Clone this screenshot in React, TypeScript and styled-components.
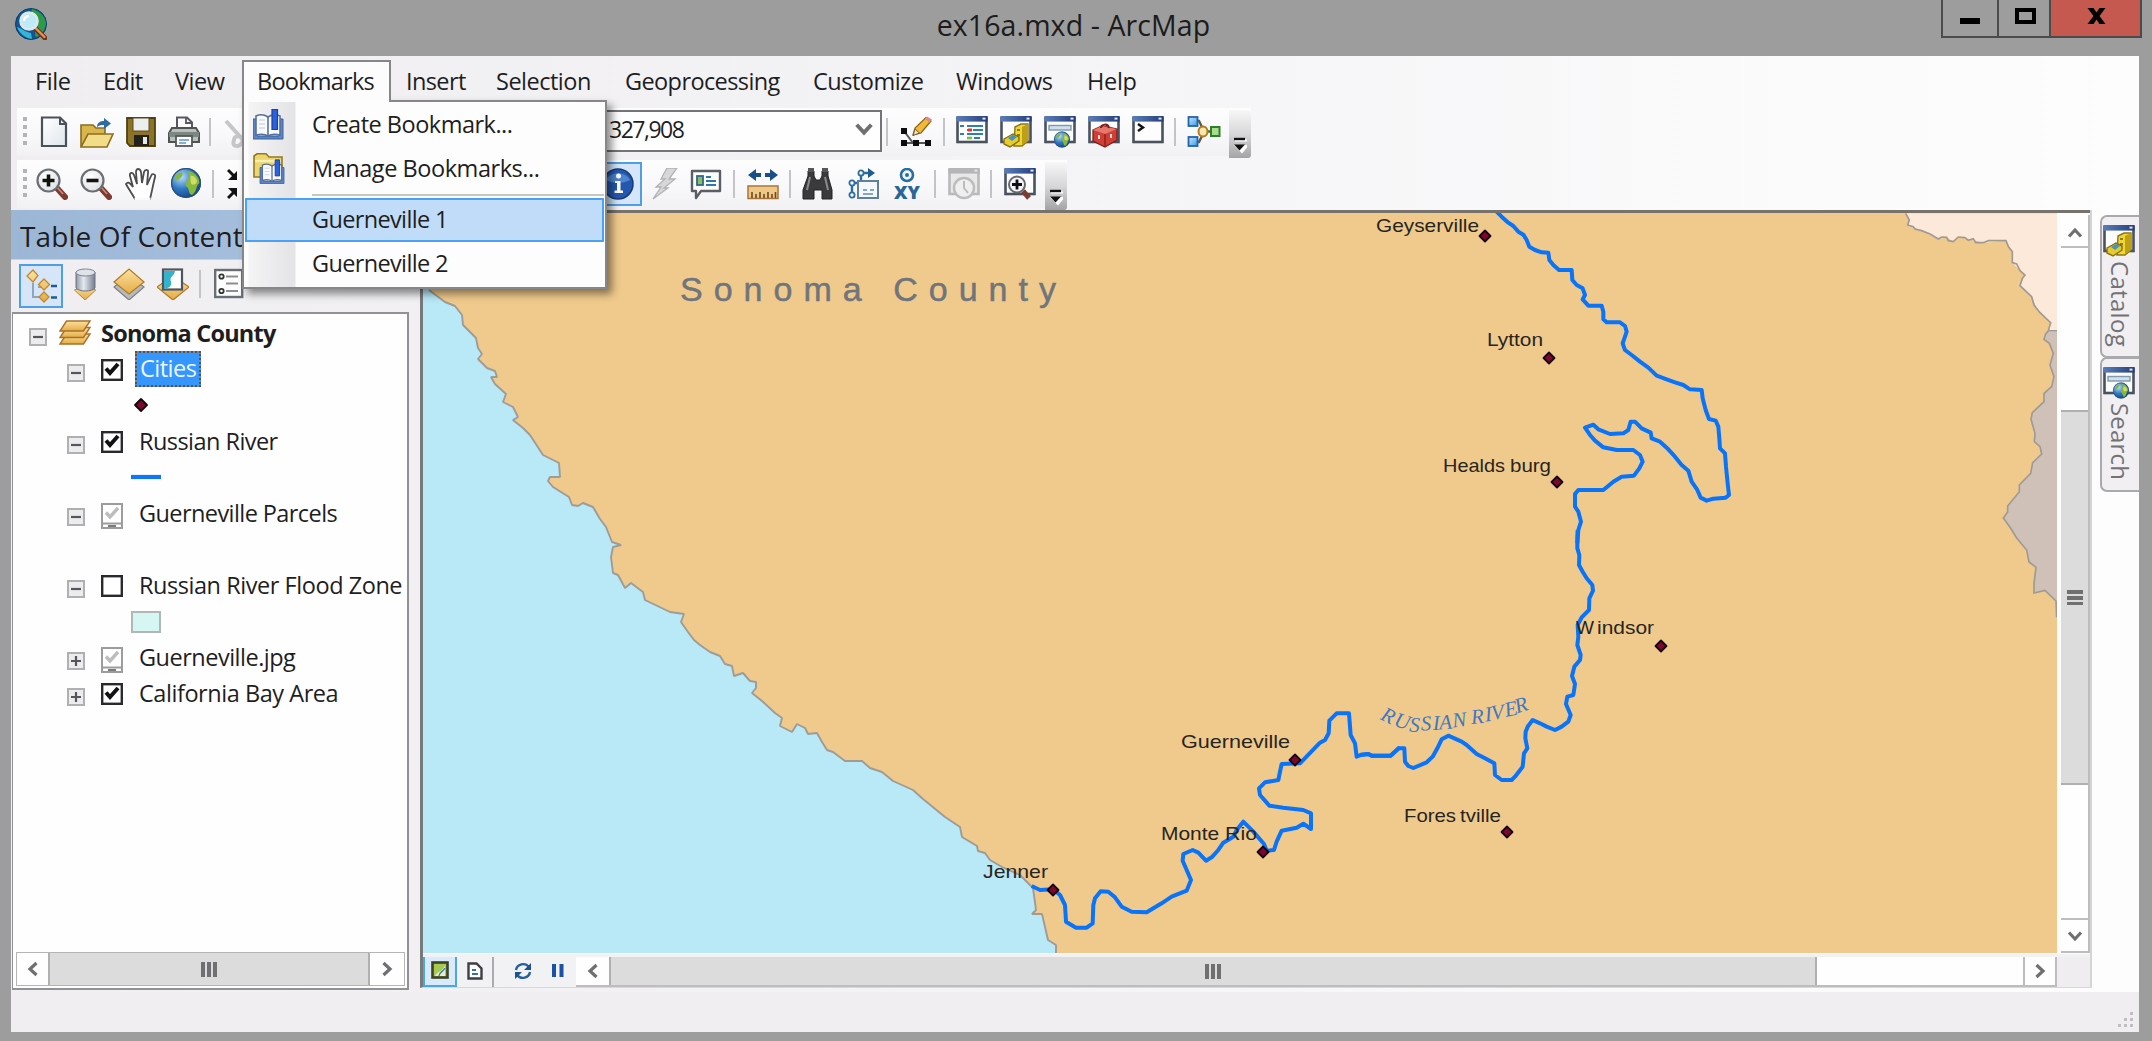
import React from 'react';
import styled, { createGlobalStyle, css } from 'styled-components';

const Global = createGlobalStyle`
  * { box-sizing: border-box; }
  body { margin: 0; background: #9d9d9d; overflow: hidden; }
`;

const ui = "'Open Sans', 'Noto Sans', sans-serif";

/* ---------- window frame ---------- */

const Frame = styled.div`
  width: 2152px;
  height: 1041px;
  background: #9d9d9d;
  font-family: ${ui};
  color: #1e1e22;
  display: flex;
  flex-direction: column;
  overflow: hidden;
`;

const TitleBar = styled.header`
  height: 56px;
  flex: none;
  display: grid;
  grid-template-columns: 241px 1fr 241px;
  padding: 0 10px 0 15px;
`;

const Logo = styled.div`
  padding-top: 8px;
  height: 40px;
`;

const Title = styled.div`
  text-align: center;
  font-size: 28.5px;
  line-height: 50px;
  letter-spacing: 0.1px;
  color: #1c1c1c;
  padding-right: 10px;
`;

const WindowButtons = styled.div`
  display: flex;
  justify-content: flex-end;
  height: 38px;
`;

const WindowButton = styled.div<{ $w: number; $close?: boolean }>`
  width: ${p => p.$w}px;
  height: 38px;
  border: 2px solid #4b4b4b;
  border-top: 0;
  margin-left: -2px;
  background: ${p => (p.$close ? '#c5594f' : '#9d9d9d')};
  display: flex;
  justify-content: center;
`;

const Client = styled.main`
  position: relative;
  width: 2128px;
  height: 976px;
  margin-left: 11px;
  background: linear-gradient(90deg, #f0eef1 0, #f3f2f5 900px, #fafafb 1700px, #fdfdfd 2128px);
  display: flex;
  flex-direction: column;
`;

/* ---------- menu bar ---------- */

const MenuBar = styled.nav`
  height: 51px;
  flex: none;
  display: flex;
  padding-left: 24px;
`;

const MenuText = styled.div<{ $w: number; $track?: number }>`
  width: ${p => p.$w}px;
  font-size: 23.5px;
  line-height: 50px;
  letter-spacing: ${p => p.$track ?? -0.5}px;
  white-space: nowrap;
`;

const OpenMenu = styled.section`
  position: absolute;
  left: 231px;
  top: 4px;
  width: 365px;
`;

const OpenMenuTab = styled.div`
  position: relative;
  z-index: 1;
  width: 149px;
  height: 42px;
  background: #fcfcfd;
  border: 2px solid #87878a;
  border-bottom: 0;
  padding-left: 13px;
  font-size: 23.5px;
  line-height: 39px;
  letter-spacing: -0.75px;
  white-space: nowrap;
`;

const MenuPanel = styled.div`
  margin-top: -2px;
  height: 189px;
  border: 2px solid #87878a;
  background: linear-gradient(90deg, #fdfdfd 4px, #f4f4f5 5px, #e4e4e7 51px, #fdfdfd 52px);
  box-shadow: 5px 5px 8px rgba(0, 0, 0, 0.45);
  padding: 1px 1px 0;
`;

const MenuRow = styled.div<{ $on?: boolean; $track: number }>`
  height: 44px;
  display: flex;
  align-items: center;
  padding-bottom: 2px;
  font-size: 23.5px;
  line-height: 38px;
  letter-spacing: ${p => p.$track}px;
  white-space: nowrap;
  border: 2px solid transparent;
  ${p =>
    p.$on &&
    css`
      background: #c0dcf9;
      border-color: #4ba0f7;
    `}
`;

const MenuIcon = styled.div`
  width: 65px;
  height: 36px;
  padding: 3px 0 0 6px;
`;

const MenuRule = styled.div`
  height: 2px;
  margin: 3px 0 2px 67px;
  background: #c6c6c8;
`;

/* ---------- toolbars ---------- */

const ToolbarRow = styled.div<{ $h: number }>`
  height: ${p => p.$h}px;
  flex: none;
  display: flex;
`;

const Strip = styled.div`
  height: 48px;
  margin: 1px 0 0 6px;
  display: flex;
  align-items: flex-start;
  background: linear-gradient(180deg, #fdfdfe, #f8f8fa 60%, #f1f0f3);
`;

const Grip = styled.div`
  width: 4px;
  height: 28px;
  margin: 9px 0 0 6px;
  background: repeating-linear-gradient(180deg, #b3b3b8 0 4px, transparent 4px 8px);
`;

const Tool = styled.div<{ $gap: number; $w?: number }>`
  width: ${p => p.$w ?? 32}px;
  height: 32px;
  margin: 8px 0 0 ${p => p.$gap}px;
  flex: none;
`;

const Divider = styled.div<{ $gap: number; $h?: number }>`
  width: 2px;
  height: ${p => p.$h ?? 28}px;
  margin: 10px 0 0 ${p => p.$gap}px;
  background: #c4c4c8;
  flex: none;
`;

const Combo = styled.div`
  width: 285px;
  height: 42px;
  margin: 2px 0 0 353px;
  border: 2px solid #747478;
  background: #fefefe;
  display: flex;
  align-items: center;
  justify-content: space-between;
  padding: 0 5px 4px 10px;
  font-size: 23px;
  line-height: 34px;
  letter-spacing: -1.5px;
`;

const ActiveTool = styled.div<{ $gap: number; $w: number; $top: number }>`
  width: ${p => p.$w}px;
  height: 44px;
  margin: ${p => p.$top}px 0 0 ${p => p.$gap}px;
  border: 2px solid #4f9fe6;
  background: #d6e6f8;
  display: flex;
  align-items: center;
  justify-content: center;
  flex: none;
`;

const Overflow = styled.div<{ $gap: number }>`
  width: 22px;
  height: 48px;
  margin: 2px 0 0 ${p => p.$gap}px;
  border-radius: 0 3px 3px 0;
  background: linear-gradient(180deg, #f7f7f8, #d7d7d9 50%, #a4a4a7);
  display: flex;
  align-items: flex-end;
  justify-content: center;
  padding-bottom: 4px;
`;

/* ---------- body ---------- */

const Body = styled.div`
  height: 782px;
  flex: none;
  display: flex;
`;

const Toc = styled.aside`
  width: 398px;
  display: flex;
  flex-direction: column;
`;

const TocTitle = styled.div`
  height: 50px;
  background: linear-gradient(90deg, #9cb6d6, #abc3e0);
  border-bottom: 1px solid #c6d3e3;
  padding-left: 9px;
  font-size: 28px;
  line-height: 53px;
  letter-spacing: 0.1px;
`;

const TocTools = styled.div`
  height: 52px;
  display: flex;
  padding-left: 8px;
`;

const TocBox = styled.div`
  height: 678px;
  margin-left: 1px;
  border: 2px solid #929296;
  border-left-width: 1px;
  background: #fefefe;
  display: flex;
  flex-direction: column;
  justify-content: space-between;
`;

const Tree = styled.div`
  padding-top: 2px;
`;

const TreeRow = styled.div<{ $indent: number; $track?: number; $bold?: boolean }>`
  height: 36px;
  display: flex;
  align-items: center;
  padding-left: ${p => p.$indent}px;
  padding-bottom: 2px;
  font-size: 23.5px;
  font-weight: ${p => (p.$bold ? 700 : 400)};
  letter-spacing: ${p => p.$track ?? -0.5}px;
  line-height: 34px;
  white-space: nowrap;
`;

const Expander = styled.div`
  width: 18px;
  height: 18px;
  flex: none;
  margin: 7px 16px 0 0;
  border: 2px solid #b0b0b3;
  background: #ececee;
  display: flex;
`;

const Check = styled.div`
  width: 22px;
  height: 28px;
  flex: none;
  margin: 8px 16px 0 0;
`;

const Selected = styled.span`
  height: 36px;
  width: 66px;
  margin-left: -4px;
  padding-left: 3px;
  line-height: 31px;
  background: #3597fd;
  color: #eef5ff;
  border: 2px dotted #7a4a1c;
`;

const LayersIcon = styled.div`
  width: 32px;
  height: 26px;
  margin: 0 10px 0 -4px;
`;

/* ---------- scroll bars ---------- */

const HBar = styled.div`
  display: flex;
  flex: 1;
  background: #fdfdfd;
  border-bottom: 2px solid #bdbdc0;
`;

const TocScroll = styled.div`
  display: flex;
  height: 34px;
  margin: 0 2px 2px 3px;
  border: 1px solid #b5b5b8;
`;

const ScrollButton = styled.div<{ $w: number; $h: number; $edge?: string; $drop?: number }>`
  width: ${p => p.$w}px;
  height: ${p => p.$h}px;
  flex: none;
  background: #fefefe;
  display: flex;
  align-items: center;
  justify-content: center;
  padding-top: ${p => p.$drop ?? 0}px;
  ${p => p.$edge && `border-${p.$edge}: 2px solid #bdbdc0;`}
`;

const Thumb = styled.div<{ $size: number; $vertical?: boolean }>`
  ${p => (p.$vertical ? `height: ${p.$size}px;` : `width: ${p.$size}px;`)}
  flex: none;
  background: #dcdcdc;
  display: flex;
  align-items: center;
  justify-content: center;
  border: 0 solid #b0b0b3;
  border-width: ${p => (p.$vertical ? '2px 0' : '0 2px')};
`;

const Bars = styled.div<{ $vertical?: boolean }>`
  width: 16px;
  height: 15px;
  background: repeating-linear-gradient(
    ${p => (p.$vertical ? '180deg' : '90deg')}, #707073 0 4px, #dcdcdc 4px 6px);
`;

const VBar = styled.div`
  width: 29px;
  margin: 2px 0 0 4px;
  height: 738px;
  background: #fefefe;
  border-right: 2px solid #bdbdc0;
  display: flex;
  flex-direction: column;
`;

/* ---------- map pane ---------- */

const MapPane = styled.section`
  width: 1672px;
  height: 778px;
  margin-left: 11px;
  border-left: 3px solid #77797b;
  border-right: 2px solid #d4d4d7;
  border-bottom: 1px solid #d8d8db;
  display: flex;
  flex-direction: column;
`;

const MapTop = styled.div`
  height: 743px;
  display: flex;
  border-top: 3px solid #77726c;
`;

const MapBottom = styled.div`
  height: 34px;
  display: flex;
  background: #f2f1f3;
  padding-top: 3px;
  border-top: 1px solid #fbfbfb;
`;

const ViewButtons = styled.div`
  width: 153px;
  height: 30px;
  display: flex;
  align-items: center;
  flex: none;
`;

const ViewButton = styled.div<{ $w: number; $on?: boolean; $line?: boolean }>`
  width: ${p => p.$w}px;
  height: 30px;
  display: flex;
  align-items: center;
  justify-content: center;
  padding-bottom: 3px;
  ${p => p.$on && 'background: #d8eafb; border: 2px solid #4ba8dc; border-top: 0;'}
  ${p => p.$line && 'border-right: 2px solid #acacb0;'}
`;

const Corner = styled.div`
  width: 33px;
  height: 30px;
  flex: none;
  background: #efedf0;
`;

/* ---------- docked tabs ---------- */

const SideTabs = styled.aside`
  width: 39px;
  margin: 5px 0 0 auto;
  display: flex;
  flex-direction: column;
`;

const SideTab = styled.div<{ $h: number; $track: number }>`
  height: ${p => p.$h}px;
  border: 2px solid #aaaaae;
  border-right: 0;
  border-radius: 7px 0 0 7px;
  background: #f1eff2;
  padding: 8px 0 0 1px;
  margin-bottom: -1px;
  font-size: 24px;
  color: #737377;
  letter-spacing: ${p => p.$track}px;
`;

const SideText = styled.div`
  writing-mode: vertical-rl;
  line-height: 34px;
  padding-top: 4px;
  width: 34px;
`;

const Status = styled.footer`
  height: 40px;
  flex: none;
  background: #f0eef1;
  display: flex;
  justify-content: flex-end;
  align-items: flex-end;
  padding: 0 5px 4px;
`;

/* ---------- icons ---------- */

const Drawing = styled.svg`
  display: block;
  flex: none;
`;

const Hidden = styled.svg`
  position: absolute;
`;

const Svg = ({ w = 32, h = 32, box, children }: { w?: number; h?: number; box?: string; children: React.ReactNode }) => (
  <Drawing width={w} height={h} viewBox={box ?? `0 0 ${w} ${h}`} fill="none">
    {children}
  </Drawing>
);

const Defs = () => (
  <Hidden width="0" height="0">
    <defs>
      <radialGradient id="globe" cx=".35" cy=".3" r=".8">
        <stop offset="0" stopColor="#b9dcf8" /><stop offset=".5" stopColor="#2f78c4" /><stop offset="1" stopColor="#123a78" />
      </radialGradient>
      <radialGradient id="lens" cx=".4" cy=".35" r=".7">
        <stop offset="0" stopColor="#fff" /><stop offset="1" stopColor="#dcdfe2" />
      </radialGradient>
      <linearGradient id="bar" x1="0" x2="1"><stop offset="0" stopColor="#5b7db8" /><stop offset="1" stopColor="#263f7c" /></linearGradient>
      <linearGradient id="gold" x1="0" y1="0" x2="0" y2="1"><stop offset="0" stopColor="#fbe2a0" /><stop offset="1" stopColor="#e5ab45" /></linearGradient>
      <linearGradient id="drum" x1="0" x2="1"><stop offset="0" stopColor="#8f98a8" /><stop offset=".4" stopColor="#e6eaf0" /><stop offset="1" stopColor="#747e90" /></linearGradient>
      <linearGradient id="page" x1="0" x2="1" y2="1"><stop offset="0" stopColor="#fff" /><stop offset="1" stopColor="#dfe6ea" /></linearGradient>
      <linearGradient id="blueBox" x1="0" y1="0" x2="1" y2="1"><stop offset="0" stopColor="#c7e8ff" /><stop offset="1" stopColor="#3a9ae8" /></linearGradient>
    </defs>
  </Hidden>
);

const Globe = ({ cx, cy, r }: { cx: number; cy: number; r: number }) => (
  <g transform={`translate(${cx} ${cy}) scale(${r / 10})`}>
    <circle r="10" fill="url(#globe)" />
    <path d="M1-8C5-8 9-4 9 0 6 2 8 5 4 8 1 7 3 4 0 2-1-1 4-3 1-8ZM-6-6C-3-8-1-7-3-4-5-2-7-1-8-2Z" fill="#86b83c" />
    <path d="M3-5C6-5 8-2 7 0 5 2 3 1 3-1Z" fill="#cfdc6a" />
    <circle r="9.6" stroke="#2a4f7c" strokeWidth=".8" />
  </g>
);

const Win = ({ gray }: { gray?: boolean }) => (
  <g>
    <rect x="1.5" y="2" width="29" height="24" fill={gray ? '#e8e8e9' : '#fdfdfe'} stroke={gray ? '#b9b9bb' : '#4a525e'} strokeWidth="2.6" />
    <rect x=".4" y="0" width="31.2" height="5.6" fill={gray ? '#b6b6b9' : 'url(#bar)'} />
    <rect x="26.5" y="1.6" width="3" height="2" fill="#dde7f6" />
  </g>
);

const Cabinet = () => (
  <g>
    <path d="M15 11 21 8h7v17l-6 5h-8Z" fill="#f0d632" stroke="#8d7713" strokeWidth="1.4" />
    <path d="M22 11v18l6-4V8Z" fill="#bd9f18" />
    <path d="M4 23 13 18l6 3v4l-9 6-6-3Z" fill="#e8cc2c" stroke="#857015" strokeWidth="1.4" />
    <path d="M8 22 13 19l4 2-5 4Z" fill="#4495bd" />
    <path d="M17 14h3M17 19h3" stroke="#726010" strokeWidth="1.6" />
  </g>
);

const CatalogIcon = () => <Svg><Win /><Cabinet /></Svg>;
const SearchIcon = () => (
  <Svg>
    <Win />
    <rect x="5" y="9.5" width="22" height="4.5" fill="#cfe0ee" stroke="#8298ae" strokeWidth="1.4" />
    <Globe cx={18} cy={23.5} r={8} />
  </Svg>
);

const Magnifier = ({ plus }: { plus?: boolean }) => (
  <Svg>
    <path d="M20 19 29 29" stroke="#7d3a30" strokeWidth="6" strokeLinecap="round" />
    <path d="M20 18 27 26" stroke="#c58a80" strokeWidth="1.6" />
    <circle cx="12.500" cy="12.5" r="11" fill="url(#lens)" stroke="#6b6f73" strokeWidth="2.2" />
    <path d={plus ? 'M6.500 12.5h12M12.500 6.5v12' : 'M6.500 12.5h12'} stroke="#111" strokeWidth="3.6" />
  </Svg>
);

const Chevron = ({ d, size = 18 }: { d: 'l' | 'r' | 'u' | 'd'; size?: number }) => {
  const rot = { u: 0, r: 90, d: 180, l: 270 }[d];
  return (
    <Svg w={size} h={size} box="0 0 18 18">
      <path d="M3 12.5 9 6l6 6.5" stroke="#6f6f72" strokeWidth="3.2" transform={`rotate(${rot} 9 9)`} />
    </Svg>
  );
};

const OverflowMark = () => (
  <Svg w={14} h={17}>
    <path d="M2 3.5h12M3 9h11l-5 6z" stroke="#fff" strokeWidth="2" fill="#fff" />
    <path d="M1 2h11" stroke="#111" strokeWidth="2.4" />
    <path d="M1 7.5h11l-5.5 6z" fill="#111" />
  </Svg>
);

const DoubleBook = ({ s = 1, x = 0, y = 0 }: { s?: number; x?: number; y?: number }) => (
  <g transform={`translate(${x} ${y}) scale(${s})`}>
    <path d="M0 10h4v17h22V10h4v20H0Z" fill="#5c85c4" stroke="#39609f" strokeWidth="1" />
    <path d="M3 7c4-2 9-1 12 1 3-2 8-3 12-1v19c-4-1-9-1-12 1-3-2-8-2-12-1Z" fill="#f8fafd" stroke="#56709c" strokeWidth="1.6" />
    <path d="M15 8v18" stroke="#56709c" strokeWidth="1.6" />
    <path d="M6 11h6M6 15h6M6 19h6" stroke="#cfd8e6" strokeWidth="1.4" />
    <path d="M19 .5h5.500v20h-5.500Z" fill="#2b62dc" stroke="#1a3f9e" strokeWidth="1.200" />
  </g>
);

const Diamond = ({ x, y, s = 6 }: { x: number; y: number; s?: number }) => (
  <path d={`M${x} ${y - s + 0.5}L${x + s - 0.5} ${y} ${x} ${y + s - 0.5} ${x - s + 0.5} ${y}Z`} fill="#7c0630" stroke="#15040a" strokeWidth="1.8" strokeLinejoin="round" />
);

/* ---------- data ---------- */

const menusLeft = [
  { t: 'File', w: 68, k: -0.4 },
  { t: 'Edit', w: 72, k: -0.5 },
  { t: 'View', w: 231, k: -0.5 },
  { t: 'Insert', w: 90, k: -0.6 },
  { t: 'Selection', w: 129, k: -0.5 },
  { t: 'Geoprocessing', w: 188, k: -0.6 },
  { t: 'Customize', w: 143, k: -0.5 },
  { t: 'Windows', w: 131, k: -0.5 },
  { t: 'Help', w: 60, k: -0.3 },
];

type Layer = { t: string; open: boolean; check: 'on' | 'off' | 'dim'; k?: number; symbol?: 'dot' | 'line' | 'none' | 'area'; sel?: boolean };
const layers: Layer[] = [
  { t: 'Cities', open: true, check: 'on', symbol: 'dot', sel: true },
  { t: 'Russian River', open: true, check: 'on', symbol: 'line', k: -0.55 },
  { t: 'Guerneville Parcels', open: true, check: 'dim', symbol: 'none', k: -0.58 },
  { t: 'Russian River Flood Zone', open: true, check: 'off', symbol: 'area', k: -0.45 },
  { t: 'Guerneville.jpg', open: false, check: 'dim' },
  { t: 'California Bay Area', open: false, check: 'on', k: -0.45 },
];

type Part = { s: string; x: number; w: number };
type City = { b: number; cx: number; cy: number; parts: Part[] };
const cities: City[] = [
  { b: 232, cx: 1485, cy: 236, parts: [{ s: 'Geyserville', x: 1376, w: 103 }] },
  { b: 346, cx: 1549, cy: 358, parts: [{ s: 'Lytton', x: 1487, w: 56 }] },
  { b: 472, cx: 1557, cy: 482, parts: [{ s: 'Healds', x: 1443, w: 62 }, { s: 'burg', x: 1510, w: 41 }] },
  { b: 634, cx: 1661, cy: 646, parts: [{ s: 'W', x: 1576, w: 18 }, { s: 'indsor', x: 1597, w: 57 }] },
  { b: 822, cx: 1507, cy: 832, parts: [{ s: 'Fores', x: 1404, w: 52 }, { s: 'tville', x: 1460, w: 41 }] },
  { b: 748, cx: 1295, cy: 760, parts: [{ s: 'Guerneville', x: 1181, w: 109 }] },
  { b: 840, cx: 1263, cy: 852, parts: [{ s: 'Monte ', x: 1161, w: 64 }, { s: 'Rio', x: 1225, w: 32 }] },
  { b: 878, cx: 1053, cy: 890, parts: [{ s: 'Jenner', x: 983, w: 65 }] },
];

const CheckMark = ({ kind }: { kind: Layer['check'] }) => (
  <Svg w={22} h={28}>
    {kind === 'dim' ? (
      <>
        <rect x="1" y="1" width="20" height="24" fill="#fff" stroke="#9c9c9f" strokeWidth="2" />
        <path d="M1 20.5h20" stroke="#9c9c9f" strokeWidth="2" />
        <path d="M7 23h8" stroke="#7c7c80" strokeWidth="2" />
        <path d="M5 9.5 9 14l8-9" stroke="#bdbdc0" strokeWidth="3.4" />
      </>
    ) : (
      <>
        <rect x="1.2" y="1.2" width="19.6" height="19.6" fill="#fff" stroke="#2a2a2e" strokeWidth="2.4" />
        {kind === 'on' && <path d="M5 9.5 9 14l8-9" stroke="#111" strokeWidth="4" />}
      </>
    )}
  </Svg>
);

/* ---------- map ---------- */

const coast =
  'M423 213H410V280L429 290 445 302 455 306 462 315 463 325 476 338 478 348 482 354 478 359 487 368 495 371 497 377 491 377 495 384 506 394 503 402 513 407 518 417 513 420 523 428 530 435 543 455 559 463 560 477 550 477 548 481 553 487 569 497 572 505 578 506 583 503 593 507 600 519 606 527 612 542 621 545 613 547 611 557 613 573 618 575 625 588 631 583 643 592 645 600 670 612 684 614 681 622 688 632 694 640 ' +
  '700 645 710 652 720 656 725 664 732 666 734 676 743 673 750 681 756 682 756 688 752 693 762 701 775 713 782 718 780 726 792 732 797 724 805 728 808 734 817 733 822 742 827 750 833 752 845 761 862 761 870 768 882 772 893 781 913 790 923 799 945 817 960 827 962 837 977 846 978 851 985 853 990 860 1002 867 1020 875 1033 888 1036 910 1032 914 1042 914 1048 940 1056 945 1056 954';

const east =
  'M197 640 208 660 203 675 220 680 225 687 245 692 270 702 295 717 305 711 320 712 325 722 340 725 355 711 375 713 385 721 400 716 407 728 430 728 445 722 498 722 505 740 517 755 517 788 530 792 540 812 555 825 547 835 540 857 575 890 582 915 600 938 632 968 625 992 617 1002 612 1018 628 1030 640 1060 630 1095 642 1130 635 1160 612 1180 612 1205 577 1238 573 1258 585 1300 583 1325 600 1340 605 1362 578 1388 572 1420 538 1455 538 1475 503 1518 503 1536 490 1554 512 1585 530 1614 560 1650 567 1686 588 1702 582 1750 582 1779 615 1771 648 1803 650 1852';

const MapView = () => (
  <Drawing width="1634" height="740" viewBox="423 213 1634 740">
    <rect x="423" y="213" width="1634" height="740" fill="#f0ca8c" />
    <path d={coast + 'L1056 960H410V213Z'} fill="#b9e8f6" />
    <path d={coast.replace('M423 213H410V280L', 'M')} fill="none" stroke="#9d9c98" strokeWidth="1.9" strokeLinejoin="bevel" />
    <g transform="translate(1840 0) scale(.33333)">
      <path d={east + 'L660 1852V640Z'} fill="#cfc1b8" />
      <path d="M197 640 208 660 203 675 245 692 295 717 320 712 340 725 355 711 400 720 430 728 498 722 517 755 517 788 555 825 540 857 575 890 590 925 632 968 625 992H660V640Z" fill="#fde9da" />
      <path d={east} fill="none" stroke="#a09a94" strokeWidth="5" />
      <path d="M625 992h30" stroke="#a09a94" strokeWidth="4" />
    </g>
    <g fill="none" stroke="#0873fb" strokeWidth="12" strokeLinejoin="round" transform="translate(1360 200) scale(.33333)">
      <path d="M405 30 425 50 445 68 460 78 475 95 490 104 500 120 508 140 525 150 545 157 565 158 568 180 580 195 597 210 635 210 637 240 650 255 668 265 675 285 668 298 685 317 725 317 730 335 730 358 740 367 780 367 795 378 800 395 795 410 788 430 795 450 815 465 840 485 865 503 890 527 920 538 945 547 970 555 990 568 1025 570 1028 595 1037 630 1047 657 1067 662 1075 680 1078 715 1080 745 1095 760 1098 800 1103 850 1107 885 1097 893 1060 896 1040 902 1022 893 1012 870 995 845 985 812 965 795 945 770 925 748 900 725 875 715 872 698 845 685 825 665 812 665 805 690 790 700 750 702 715 688 700 674 675 683 690 705 705 722 730 742 770 750 820 750 840 765 848 785 838 805 822 827 785 830 760 845 730 870 655 870 645 882 645 920 655 935 663 965 655 990 652 1030" />
      <g transform="translate(0 990)">
        <path d="M653 0 652 20 652 55 658 75 657 105 668 125 680 145 697 165 699 182 688 205 687 240 665 262 653 285 655 320 652 345 662 375 660 390 643 410 636 438 645 462 640 495 622 500 618 522 632 555 625 575 605 590 585 600 560 590 540 580 518 570 503 590 497 605 496 625 502 655 492 670 488 710 465 740 455 750 425 750 405 735 403 700 375 685 350 672 320 645 305 635 265 617 245 628 232 655 218 680 200 697 160 714 145 708 135 695 133 655 115 655 92 677 35 677 25 672 0 675" />
      </g>
    </g>
    <path fill="none" stroke="#0873fb" strokeWidth="12" strokeLinejoin="round" transform="translate(960 660) scale(.33333)" d="M1320 262 1292 287 1235 287 1225 282 1205 284 1190 290 1185 250 1172 225 1167 160 1130 160 1108 182 1106 220 1095 240 1080 248 1020 310 965 312 958 345 955 360 915 367 897 385 900 405 928 437 970 443 1030 450 1053 460 1053 507 1030 491 1010 503 965 512 950 545 942 570 920 572 912 552 880 515 850 485 830 510 820 530 790 548 775 570 755 592 738 602 715 578 698 570 670 582 668 602 680 630 693 660 680 692 635 710 605 730 560 757 515 755 485 740 465 712 445 695 422 694 405 715 400 735 398 790 380 803 348 803 318 785 315 735 300 705 280 688 240 690 215 678" />
    {cities.map(c => <Diamond key={c.cx} x={c.cx} y={c.cy} />)}
    <g fontFamily="'Liberation Sans', Arial, sans-serif" fontSize="18.5" fill="#27251f">
      {cities.map(c => (
        <text key={c.cx} y={c.b}>
          {c.parts.map(p => (
            <tspan key={p.s} x={p.x} textLength={p.w} lengthAdjust="spacingAndGlyphs">{p.s}</tspan>
          ))}
        </text>
      ))}
    </g>
    <text x="680" y="301" textLength="376" fontFamily="'Liberation Sans', Arial, sans-serif" fontSize="34" fill="#70757b" stroke="#70757b" strokeWidth=".5">Sonoma County</text>
    <text
      fontFamily="'Liberation Serif', 'Times New Roman', serif" fontStyle="italic" fontSize="21" fill="#4277c4"
      x="1379.5 1393 1409 1421 1433 1439.5 1453 1467 1471.5 1485.5 1492 1506 1517"
      y="719 725.5 731.5 730.5 730 729.5 727.5 725 724 721.5 720 717 713.5"
      rotate="26 18 3 -2 -2 -4 -6 0 -5 -6 -8 -12 -18"
    >RUSSIAN RIVER</text>
  </Drawing>
);

/* ---------- page ---------- */

export default function App() {
  return (
    <Frame>
      <Global />
      <Defs />
      <TitleBar>
        <Logo>
          <Svg>
            <circle cx="16" cy="16" r="15.5" fill="#10578f" stroke="#0b3f6d" strokeWidth="1" />
            <path d="M17 1c8 2 14 8 14 15-1 7-6 12-10 13-3-5 2-8 1-13-1-6-7-6-5-15Z" fill="#2c9a4a" />
            <path d="M2 19c3 7 8 11 15 12l-1-6C10 24 6 20 2 19Z" fill="#38b4d6" />
            <path d="M20 20 30 30" stroke="#6b3515" strokeWidth="5" strokeLinecap="round" />
            <path d="M20 19.500 29.500 29" stroke="#e0935a" strokeWidth="2.4" strokeLinecap="round" />
            <circle cx="14" cy="13" r="8.500" fill="#bfeafa" stroke="#dfe7ea" strokeWidth="2.600" />
            <path d="M9 13c0-3 2-5 5-5" stroke="#fff" strokeWidth="2.400" />
          </Svg>
        </Logo>
        <Title>ex16a.mxd - ArcMap</Title>
        <WindowButtons>
          <WindowButton $w={58}><Svg w={54} h={36}><rect x="17" y="18" width="20" height="6" fill="#000" /></Svg></WindowButton>
          <WindowButton $w={54}><Svg w={50} h={36}><rect x="18" y="10" width="17" height="12" stroke="#000" strokeWidth="4" /></Svg></WindowButton>
          <WindowButton $w={93} $close><Svg w={90} h={36}><path d="M36.500 8h6l3 4.500L48.500 8h6l-6 8 6 8h-6l-3-4.500-3 4.500h-6l6-8Z" fill="#000" /></Svg></WindowButton>
        </WindowButtons>
      </TitleBar>

      <Client>
        <MenuBar>
          {menusLeft.map(m => <MenuText key={m.t} $w={m.w} $track={m.k}>{m.t}</MenuText>)}
        </MenuBar>

        <ToolbarRow $h={52}>
          <Strip>
            <Grip />
            <Tool $gap={13}>
              <Svg>
                <path d="M2 1.500h18l6 6V30H2Z" fill="url(#page)" stroke="#4b5158" strokeWidth="2.200" />
                <path d="M20 1.500V8h6" stroke="#4b5158" strokeWidth="2" />
              </Svg>
            </Tool>
            <Tool $gap={8} $w={34}>
              <Svg w={34}>
                <path d="M1 9h12l3 3h9v18H1Z" fill="#d9b54e" stroke="#8a6d20" strokeWidth="1.600" />
                <path d="M8 18h25l-6 13H1Z" fill="#f3dc88" stroke="#8a6d20" strokeWidth="1.600" />
                <path d="M17 11c0-5 4-6 7-6V2l7 5.500-7 5.500V9c-3 0-4 0-7 2Z" fill="#2f6aa3" />
              </Svg>
            </Tool>
            <Tool $gap={12}>
              <Svg>
                <path d="M1 2h28v28H4l-3-3Z" fill="#8c7326" stroke="#4f4113" strokeWidth="1.800" />
                <rect x="7" y="2" width="16" height="13" fill="#eceff0" stroke="#5d4e1c" strokeWidth="1" />
                <rect x="8" y="19" width="15" height="11" fill="#23211b" />
                <rect x="17" y="21" width="4" height="7" fill="#e8e8e8" />
              </Svg>
            </Tool>
            <Tool $gap={10}>
              <Svg>
                <path d="M9 13V1.500h10l5 5V13" fill="#fbfbfb" stroke="#55585c" strokeWidth="2" />
                <path d="M18 2v5h5" stroke="#55585c" strokeWidth="1.800" />
                <path d="M4 12h24l3 5v9H1v-9Z" fill="#b9bfba" stroke="#4f5453" strokeWidth="2" />
                <rect x="1" y="16" width="30" height="5" fill="#7d8781" />
                <rect x="8" y="20" width="16" height="10" fill="#fff" stroke="#55585c" strokeWidth="1.800" />
                <path d="M11 24h10M11 27h7" stroke="#5a9ac9" strokeWidth="1.500" />
              </Svg>
            </Tool>
            <Divider $gap={9} />
            <Tool $gap={13} $w={20}>
              <Svg w={20}>
                <path d="M2 5 20 25M10 24c0-4 6-5 8-2s-1 8-5 8-4-3-3-6Z" stroke="#c6c6c8" strokeWidth="4" />
              </Svg>
            </Tool>
            <Combo>
              <span>327,908</span>
              <Chevron d="d" size={22} />
            </Combo>
            <Divider $gap={4} />
            <Tool $gap={12}>
              <Svg>
                <path d="M4 15 13 27M4 27h25" stroke="#555" strokeWidth="2" />
                <path d="M1 12h6v6H1ZM1 24h6v6H1ZM13 24h6v6h-6ZM25 24h6v6h-6Z" fill="#0d0d0d" />
                <path d="M13 19 15 12 26 1.500 31 5 21 17Z" fill="#f0b93a" stroke="#8b6316" strokeWidth="1.200" />
                <path d="M25 2.500 27 .5l5 3-2.500 3Z" fill="#d98a90" />
                <path d="M13 19.500 15 13l4.500 4Z" fill="#f7dfb4" stroke="#6b5a35" strokeWidth="1" />
              </Svg>
            </Tool>
            <Divider $gap={11} />
            <Tool $gap={11}>
              <Svg>
                <Win />
                <path d="M4 10h4M11 10h16M11 14h4M4 18h4M11 18h16M17 14h10M18 22h6" stroke="#2f7fb5" strokeWidth="2" />
                <path d="M12 14h4" stroke="#d83a2f" strokeWidth="3" />
                <path d="M11 22h5" stroke="#7cc142" strokeWidth="2.600" />
              </Svg>
            </Tool>
            <Tool $gap={12}><CatalogIcon /></Tool>
            <Tool $gap={12}><SearchIcon /></Tool>
            <Tool $gap={12}>
              <Svg>
                <Win />
                <path d="M5 14 14 10l15 3v11L17 31 5 25Z" fill="#cf3f36" stroke="#7f1e18" strokeWidth="1.300" />
                <path d="M5 14 17 18l12-5-15-3Z" fill="#e8766b" />
                <path d="M17 18v12" stroke="#8e231d" strokeWidth="1.500" />
                <path d="M13 12c0-4 7-5 8 0" stroke="#7f1e18" strokeWidth="2" />
                <path d="M11 19v4M23 18v4" stroke="#f6d8d5" strokeWidth="2" />
              </Svg>
            </Tool>
            <Tool $gap={12}>
              <Svg><Win /><path d="M6 8 11 11.500 6 15" stroke="#111" strokeWidth="2.400" /></Svg>
            </Tool>
            <Divider $gap={10} />
            <Tool $gap={11} $w={34}>
              <Svg w={34}>
                <path d="M6 5h6l4 8M6 26h6l4-8M14 15.500h15" stroke="#5b5b48" strokeWidth="2.400" />
                <rect x="1.500" y="1" width="9" height="9" fill="url(#blueBox)" stroke="#2563a8" strokeWidth="1.800" />
                <rect x="1.500" y="21" width="9" height="9" fill="url(#blueBox)" stroke="#2563a8" strokeWidth="1.800" />
                <ellipse cx="16" cy="15.500" rx="4.500" ry="5" fill="#f8e7b0" stroke="#b37b1a" strokeWidth="2" />
                <rect x="24" y="11" width="8.500" height="9" fill="#a9dc8c" stroke="#2e7f2a" strokeWidth="2" />
              </Svg>
            </Tool>
            <Overflow $gap={8}><OverflowMark /></Overflow>
          </Strip>
        </ToolbarRow>

        <ToolbarRow $h={51}>
          <Strip>
            <Grip />
            <Tool $gap={9}><Magnifier plus /></Tool>
            <Tool $gap={12}><Magnifier /></Tool>
            <Tool $gap={13}>
              <Svg>
                <path d="M10 31C6 24 3 20 1 16c2-3 4-1 7 3L5 8C4 4 8 4 9 7l3 9L11 4c0-4 4-4 5 0l1 11 2-11c1-3 5-3 4 1l-1 12 4-9c1-3 5-2 4 1-2 8-3 14-5 22Z" fill="#fff" stroke="#4d4d50" strokeWidth="1.800" />
                <path d="M9.500 31h16" stroke="#fafafc" strokeWidth="3" />
              </Svg>
            </Tool>
            <Tool $gap={13}><Svg><Globe cx={16} cy={15} r={15} /></Svg></Tool>
            <Divider $gap={10} />
            <Tool $gap={13} $w={12}>
              <Svg w={12}>
                <path d="M1 2 9 10M1 30 9 22" stroke="#111" strokeWidth="3" />
                <path d="M10 3v9H1ZM10 29V20H1Z" fill="#111" />
              </Svg>
            </Tool>
            <ActiveTool $gap={355} $w={48} $top={2}>
              <Svg>
                <circle cx="16" cy="16" r="15" fill="#2458ae" stroke="#163a7c" strokeWidth="1.500" />
                <path d="M4 12C8 3 24 3 28 12 20 16 12 16 4 12Z" fill="#4f84d2" />
                <circle cx="16.500" cy="8" r="2.500" fill="#fff" />
                <path d="M13 13h5.500v9.500H21V25h-8.500v-2.500H15V15h-2Z" fill="#fff" />
              </Svg>
            </ActiveTool>
            <Tool $gap={8}>
              <Svg>
                <path d="M17 0H27L19 11h6L14 20h4L3 31 11 19H6l9-8h-4Z" fill="#d7d7d9" stroke="#b2b2b5" strokeWidth="1.300" />
              </Svg>
            </Tool>
            <Tool $gap={8}>
              <Svg>
                <path d="M2 3h28v20H11L6 30V23H2Z" fill="#fdfdfe" stroke="#5a5f66" strokeWidth="2.400" strokeLinejoin="round" />
                <rect x="7" y="8" width="6" height="9" fill="#8bbf5c" stroke="#31648f" strokeWidth="1.800" />
                <path d="M16 9h5M16 13h10M16 17h10" stroke="#2f76ab" strokeWidth="2" />
              </Svg>
            </Tool>
            <Divider $gap={11} />
            <Tool $gap={12}>
              <Svg>
                <path d="M1 7 9 1v4h5v4H9v4ZM31 7 23 1v4h-5v4h5v4Z" fill="#174f86" />
                <rect x="1" y="18" width="30" height="12.500" fill="#f0c886" stroke="#a8743c" strokeWidth="1.500" />
                <path d="M5 30v-6M9 30v-4M13 30v-6M17 30v-4M21 30v-6M25 30v-4M28.500 30v-6" stroke="#6b4a22" strokeWidth="1.600" />
              </Svg>
            </Tool>
            <Divider $gap={10} />
            <Tool $gap={11}>
              <Svg>
                <path d="M6 3h6v5l2 4h4l2-4V3h6v5l4 14v9H20v-9h-8v9H1v-9L6 8Z" fill="#3a3a3c" stroke="#222" strokeWidth="1" />
                <path d="M6 0h6v4H6ZM20 0h6v4h-6Z" fill="#565658" />
                <path d="M8 9 5 22M23 9l3 13" stroke="#8a8a8c" strokeWidth="2" />
              </Svg>
            </Tool>
            <Tool $gap={14}>
              <Svg>
                <path d="M4 27V15h9V5h8" stroke="#2c6da0" strokeWidth="2.400" />
                <path d="M20 0 27 5l-7 5Z" fill="#1f5d90" />
                <circle cx="4" cy="27" r="2.600" fill="#fff" stroke="#2c6da0" strokeWidth="1.800" />
                <circle cx="4" cy="15" r="2.600" fill="#fff" stroke="#2c6da0" strokeWidth="1.800" />
                <circle cx="13" cy="5" r="2.600" fill="#fff" stroke="#2c6da0" strokeWidth="1.800" />
                <rect x="10" y="13" width="20" height="17" fill="#f5f8fb" stroke="#5f7f9c" strokeWidth="2" />
                <path d="M15 22h4M22 22h4M15 26h10" stroke="#88a6c0" strokeWidth="2" />
              </Svg>
            </Tool>
            <Tool $gap={14}>
              <Svg>
                <circle cx="13" cy="7" r="6" fill="#eef5fb" stroke="#2c6da0" strokeWidth="2.600" />
                <circle cx="13" cy="7" r="2" fill="#2c6da0" />
                <text x="0" y="30.500" fontFamily="'Open Sans', sans-serif" fontWeight="800" fontSize="17" fill="#2a6597" textLength="26" lengthAdjust="spacingAndGlyphs">XY</text>
              </Svg>
            </Tool>
            <Divider $gap={8} />
            <Tool $gap={12}>
              <Svg>
                <Win gray />
                <circle cx="16" cy="20" r="10" fill="#efeff0" stroke="#bcbcbf" strokeWidth="2.400" />
                <path d="M16 13v7l4 5" stroke="#bcbcbf" strokeWidth="2" />
              </Svg>
            </Tool>
            <Divider $gap={10} />
            <Tool $gap={12}>
              <Svg>
                <Win />
                <path d="M19 23 25 30" stroke="#7d3a30" strokeWidth="5" />
                <circle cx="13" cy="16.500" r="8" fill="#f6f6f8" stroke="#66696e" strokeWidth="2" />
                <path d="M8 16.500h10M13 11.500v10" stroke="#111" strokeWidth="2.800" />
              </Svg>
            </Tool>
            <Overflow $gap={9}><OverflowMark /></Overflow>
          </Strip>
        </ToolbarRow>

        <Body>
          <Toc>
            <TocTitle>Table Of Contents</TocTitle>
            <TocTools>
              <ActiveTool $gap={0} $w={44} $top={4}>
                <Svg w={34} h={34}>
                  <path d="M9 14v14h6M14 18h4" stroke="#8fa6bf" strokeWidth="2" />
                  <path d="M9 1 14 6.500 9 13 3 7ZM20 10 25.500 15.500 20 21 14.500 15.500ZM20 23 25 28 20 33 15 28Z" fill="url(#gold)" stroke="#c08a35" strokeWidth="1.300" />
                  <path d="M27 17h6M27 28.500h6" stroke="#1f5d90" strokeWidth="2.600" />
                </Svg>
              </ActiveTool>
              <Tool $gap={6} $w={33}>
                <Svg>
                  <path d="M3 22 16 18 29 22 16 32Z" fill="url(#gold)" stroke="#b07c2c" strokeWidth="1" transform="translate(3 0) scale(.82 1)" />
                  <path d="M7 4v16c3 4 16 4 19 0V4Z" fill="url(#drum)" stroke="#6a7282" strokeWidth="1" />
                  <ellipse cx="16.500" cy="4.500" rx="9.500" ry="3.500" fill="#dfe4ea" stroke="#7c8494" strokeWidth="1" />
                </Svg>
              </Tool>
              <Tool $gap={11}>
                <Svg>
                  <path d="M1 19 16 7 31 19 16 32Z" fill="#b7babd" stroke="#7d8084" strokeWidth="1.200" />
                  <path d="M1 14 16 1 31 14 16 26Z" fill="url(#gold)" stroke="#b07c2c" strokeWidth="1.300" />
                </Svg>
              </Tool>
              <Tool $gap={12}>
                <Svg>
                  <path d="M0 19 16 8 32 19 16 32Z" fill="url(#gold)" stroke="#b07c2c" strokeWidth="1.300" />
                  <rect x="6" y="1.500" width="19" height="20" fill="#fff" stroke="#4d565f" strokeWidth="2.200" />
                  <path d="M7 3h11c-1 6-6 5-4 11 1 4-2 6-7 7Z" fill="#35b2cc" />
                </Svg>
              </Tool>
              <Divider $gap={10} />
              <Tool $gap={13}>
                <Svg>
                  <rect x="1.200" y="2" width="27" height="27" fill="#fdfdfd" stroke="#6a6f77" strokeWidth="2.400" />
                  <circle cx="7.500" cy="8.500" r="2.200" stroke="#333" strokeWidth="1.800" />
                  <circle cx="7.500" cy="23" r="2.200" stroke="#333" strokeWidth="1.800" />
                  <path d="M12 8.500h12M12 15.500h12M12 23h12" stroke="#8a8d92" strokeWidth="2" />
                </Svg>
              </Tool>
            </TocTools>
            <TocBox>
              <Tree>
                <TreeRow $indent={16} $bold $track={-0.8}>
                  <Expander><Svg w={14} h={14}><path d="M2 7h10" stroke="#55555a" strokeWidth="2.200" /></Svg></Expander>
                  <LayersIcon>
                    <Svg h={26}>
                      {[13.5, 7, 0.5].map(y => (
                        <path key={y} d={`M7.500 ${y + 0.5}H31L24.500 ${y + 10.5}H1Z`} fill="url(#gold)" stroke="#a9712a" strokeWidth="1.400" />
                      ))}
                    </Svg>
                  </LayersIcon>
                  Sonoma County
                </TreeRow>
                {layers.map(l => (
                  <React.Fragment key={l.t}>
                    <TreeRow $indent={54} $track={l.k}>
                      <Expander>
                        <Svg w={14} h={14}><path d={l.open ? 'M2 7h10' : 'M2 7h10M7 2v10'} stroke="#55555a" strokeWidth="2.200" /></Svg>
                      </Expander>
                      <Check><CheckMark kind={l.check} /></Check>
                      {l.sel ? <Selected>{l.t}</Selected> : l.t}
                    </TreeRow>
                    {l.symbol && (
                      <TreeRow $indent={118}>
                        {l.symbol === 'dot' && <Svg h={36}><Diamond x={10} y={18} s={6.500} /></Svg>}
                        {l.symbol === 'line' && <Svg h={36}><path d="M0 18h30" stroke="#0f75fb" strokeWidth="4.200" /></Svg>}
                        {l.symbol === 'area' && <Svg h={36}><rect x="1" y="9" width="28" height="20" fill="#d5f6f2" stroke="#b3b6b6" strokeWidth="2" /></Svg>}
                      </TreeRow>
                    )}
                  </React.Fragment>
                ))}
              </Tree>
              <TocScroll>
                <ScrollButton $w={31} $h={32}><Chevron d="l" /></ScrollButton>
                <Thumb $size={322}><Bars /></Thumb>
                <ScrollButton $w={34} $h={32}><Chevron d="r" /></ScrollButton>
              </TocScroll>
            </TocBox>
          </Toc>

          <MapPane>
            <MapTop>
              <MapView />
              <VBar>
                <ScrollButton $w={27} $h={33} $edge="bottom" $drop={5}><Chevron d="u" /></ScrollButton>
                <ScrollButton $w={27} $h={162} />
                <Thumb $vertical $size={375}><Bars $vertical /></Thumb>
                <ScrollButton $w={27} $h={135} $edge="bottom" />
                <ScrollButton $w={27} $h={33} $edge="bottom"><Chevron d="d" /></ScrollButton>
              </VBar>
            </MapTop>
            <MapBottom>
              <ViewButtons>
                <ViewButton $w={34} $on>
                  <Svg w={18} h={18}>
                    <rect x="1.500" y="1.500" width="15" height="15" fill="#a9c84e" stroke="#3d4226" strokeWidth="2.600" />
                    <path d="M4 15C6 10 12 11 14 4v11Z" fill="#e4f0c8" />
                    <path d="M8 15c0-4 4-4 6-8" stroke="#3c7fb0" strokeWidth="1.400" />
                  </Svg>
                </ViewButton>
                <ViewButton $w={37} $line>
                  <Svg w={16} h={18}>
                    <path d="M1.500 1.500h8l5 5v10h-13Z" fill="#fff" stroke="#3c3f44" strokeWidth="2.400" />
                    <path d="M5 8h4M5 12h6" stroke="#3b6f9d" strokeWidth="2" />
                  </Svg>
                </ViewButton>
                <ViewButton $w={58}>
                  <Svg w={18} h={18}>
                    <path d="M2 8C3 2 11 0 15 5M16 10C15 16 7 18 3 13" stroke="#235f9c" strokeWidth="2.400" />
                    <path d="M17 1v7h-7ZM1 17v-7h7Z" fill="#1d5490" />
                  </Svg>
                </ViewButton>
                <ViewButton $w={12}>
                  <Svg w={14} h={14}><path d="M3 0v13M10.500 0v13" stroke="#1c51a8" strokeWidth="4" /></Svg>
                </ViewButton>
              </ViewButtons>
              <HBar>
                <ScrollButton $w={33} $h={28}><Chevron d="l" /></ScrollButton>
                <Thumb $size={1208}><Bars /></Thumb>
                <ScrollButton $w={208} $h={28} $edge="right" />
                <ScrollButton $w={32} $h={28} $edge="right"><Chevron d="r" /></ScrollButton>
              </HBar>
              <Corner />
            </MapBottom>
          </MapPane>

          <SideTabs>
            <SideTab $h={143} $track={0.3}><CatalogIcon /><SideText>Catalog</SideText></SideTab>
            <SideTab $h={135} $track={0.2}><SearchIcon /><SideText>Search</SideText></SideTab>
          </SideTabs>
        </Body>

        <Status>
          <Svg w={16} h={16}>
            <path d="M12 0h3v3h-3ZM6 6h3v3H6ZM12 6h3v3h-3ZM0 12h3v3H0ZM6 12h3v3H6ZM12 12h3v3h-3Z" fill="#bfbfc3" />
          </Svg>
        </Status>

        <OpenMenu>
          <OpenMenuTab>Bookmarks</OpenMenuTab>
          <MenuPanel>
            <MenuRow $track={-0.5}>
              <MenuIcon><Svg><DoubleBook /></Svg></MenuIcon>
              Create Bookmark...
            </MenuRow>
            <MenuRow $track={-0.45}>
              <MenuIcon>
                <Svg>
                  <path d="M1 3 4 .8h9L16 4h13v20H1Z" fill="#eed66e" stroke="#97791c" strokeWidth="1.600" />
                  <path d="M2 8h26" stroke="#f9efb6" strokeWidth="2.400" />
                  <DoubleBook s={0.8} x={7} y={6.500} />
                </Svg>
              </MenuIcon>
              Manage Bookmarks...
            </MenuRow>
            <MenuRule />
            <MenuRow $on $track={-0.65}><MenuIcon />Guerneville 1</MenuRow>
            <MenuRow $track={-0.65}><MenuIcon />Guerneville 2</MenuRow>
          </MenuPanel>
        </OpenMenu>
      </Client>
    </Frame>
  );
}
